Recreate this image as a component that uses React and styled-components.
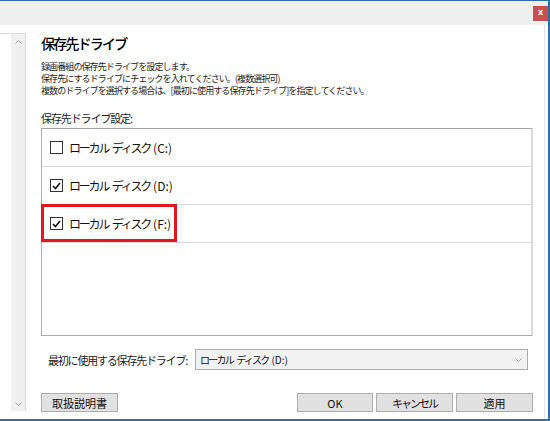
import React from "react";
import styled, { createGlobalStyle } from "styled-components";

const GlobalStyle = createGlobalStyle`
  html, body {
    margin: 0;
    padding: 0;
    background: #ffffff;
  }
  body {
    font-family: "Noto Sans CJK JP", "Noto Sans", sans-serif;
    color: #000;
  }
`;

const Window = styled.div`
  box-sizing: border-box;
  width: 550px;
  height: 421px;
  display: flex;
  flex-direction: column;
  background: #fff;
  border-top: 1px solid #2f6ea6;
  border-right: 2px solid #2f6ea6;
  border-bottom: 2px solid #2f6ea6;
`;

const TitleBar = styled.div`
  height: 24px;
  flex: none;
  background: #f0f0f0;
  display: flex;
  justify-content: flex-end;
  align-items: flex-start;
  padding-top: 5px;
  box-sizing: border-box;
`;

const CloseButton = styled.div`
  width: 15px;
  height: 15px;
  background: #c75050;
  color: #fff;
  font-family: "DejaVu Sans", sans-serif;
  font-size: 8px;
  font-weight: bold;
  line-height: 14px;
  text-align: center;
`;

const Body = styled.div`
  flex: 1;
  display: flex;
  margin-right: 3px;
  border-right: 1px solid #e3e3e3;
  min-height: 0;
`;

const Sidebar = styled.div`
  width: 26px;
  flex: none;
  box-sizing: border-box;
  margin: 8px 0;
  border-top: 1px solid #dcdcdc;
  border-right: 1px solid #dcdcdc;
  display: flex;
  justify-content: flex-end;
`;

const ScrollTrack = styled.div`
  width: 14px;
  background: #f0f0f0;
  display: flex;
  flex-direction: column;
  justify-content: space-between;
  align-items: center;
  padding: 6px 0 5px;
  box-sizing: border-box;
`;

const Main = styled.div`
  flex: 1;
  display: flex;
  flex-direction: column;
  padding: 9px 11px 0 15px;
  min-width: 0;
`;

const Title = styled.div`
  font-size: 14px;
  line-height: 18px;
  letter-spacing: -1.8px;
  font-weight: 500;
`;

const Desc = styled.div`
  margin-top: 9px;
  font-size: 9px;
  line-height: 12px;
  letter-spacing: -0.9px;
  color: #222;
`;

const Label = styled.div`
  margin-top: 14px;
  font-size: 11px;
  line-height: 14px;
  letter-spacing: -1.1px;
  color: #222;
`;

const DriveList = styled.div`
  margin-top: 3px;
  height: 208px;
  box-sizing: border-box;
  border: 1px solid #adadad;
  border-top-color: #a4a3b4;
  border-right: 2px solid #dadada;
  background: #fff;
`;

const Row = styled.div`
  position: relative;
  height: 38px;
  box-sizing: border-box;
  border-bottom: 1px solid #dadada;
  display: flex;
  align-items: center;
  padding-left: 8px;
`;

const Highlight = styled.div`
  position: absolute;
  left: -1px;
  top: -1px;
  width: 136px;
  height: 38px;
  box-sizing: border-box;
  border: 3px solid #e3151e;
  pointer-events: none;
`;

const Box = styled.div`
  width: 13px;
  height: 13px;
  box-sizing: border-box;
  border: 1px solid #333;
  background: #fff;
  display: flex;
  align-items: center;
  justify-content: center;
  flex: none;
`;

const RowText = styled.span`
  margin-left: 6px;
  font-size: 12px;
  color: #111;
  white-space: nowrap;
`;

const Kana = styled.span`
  letter-spacing: ${(p) => p.$ls}px;
  word-spacing: ${(p) => p.$ws}px;
`;

const Latin = styled.span`
  letter-spacing: 0;
  margin-left: ${(p) => p.$gap}px;
`;

const FirstDriveRow = styled.div`
  margin-top: 13px;
  display: flex;
  align-items: center;
  padding-left: 7px;
`;

const FirstLabel = styled.span`
  font-size: 11px;
  letter-spacing: -1.2px;
  color: #222;
  white-space: nowrap;
`;

const Combo = styled.div`
  flex: 1;
  margin: 0 5px 0 8px;
  height: 21px;
  box-sizing: border-box;
  border: 1px solid #acacac;
  background: #f2f2f2;
  display: flex;
  align-items: center;
  justify-content: space-between;
  padding: 0 5px 0 4px;
  font-size: 10px;
  color: #111;
  white-space: nowrap;
`;

const ButtonRow = styled.div`
  margin-top: 23px;
  display: flex;
  justify-content: space-between;
`;

const ButtonGroup = styled.div`
  display: flex;
  gap: 3px;
`;

const Button = styled.div`
  width: ${(p) => p.$w || 77}px;
  height: 19px;
  box-sizing: border-box;
  border: 1px solid #adadad;
  background: #e1e1e1;
  display: flex;
  align-items: center;
  justify-content: center;
  font-size: 11px;
  letter-spacing: ${(p) => p.$ls || 0}px;
  color: #111;
`;

function Chevron({ up }) {
  return (
    <svg width="7" height="4" viewBox="0 0 7 4">
      <path
        d={up ? "M0.5 3.5 L3.5 0.5 L6.5 3.5" : "M0.5 0.5 L3.5 3.5 L6.5 0.5"}
        fill="none"
        stroke="#a8a8a8"
        strokeWidth="1"
      />
    </svg>
  );
}

function CheckBox({ checked }) {
  return (
    <Box>
      {checked && (
        <svg width="9" height="8" viewBox="0 0 9 8">
          <path d="M1 4 L3.5 6.5 L8 1" fill="none" stroke="#111" strokeWidth="1.6" />
        </svg>
      )}
    </Box>
  );
}

// "ローカル ディスク" + "(X:)" ; kana squeezed, drive letter at normal spacing
function DriveName({ letter, ls, ws, gap }) {
  return (
    <>
      <Kana $ls={ls} $ws={ws}>
        ローカル ディスク
      </Kana>
      <Latin $gap={gap}>({letter}:)</Latin>
    </>
  );
}

const drives = [
  { letter: "C", checked: false },
  { letter: "D", checked: true },
  { letter: "F", checked: true, marked: true },
];

export default function App() {
  return (
    <>
      <GlobalStyle />
      <Window>
        <TitleBar>
          <CloseButton>x</CloseButton>
        </TitleBar>
        <Body>
          <Sidebar>
            <ScrollTrack>
              <Chevron up />
              <Chevron />
            </ScrollTrack>
          </Sidebar>
          <Main>
            <Title>保存先ドライブ</Title>
            <Desc>
              録画番組の保存先ドライブを設定します。
              <br />
              保存先にするドライブにチェックを入れてください。(複数選択可)
              <br />
              複数のドライブを選択する場合は、[最初に使用する保存先ドライブ]を指定してください。
            </Desc>
            <Label>保存先ドライブ設定:</Label>
            <DriveList>
              {drives.map((d) => (
                <Row key={d.letter}>
                  <CheckBox checked={d.checked} />
                  <RowText>
                    <DriveName letter={d.letter} ls={-2.2} ws={3} gap={3} />
                  </RowText>
                  {d.marked && <Highlight />}
                </Row>
              ))}
            </DriveList>
            <FirstDriveRow>
              <FirstLabel>最初に使用する保存先ドライブ:</FirstLabel>
              <Combo>
                <span>
                  <DriveName letter="D" ls={-1.8} ws={3} gap={3} />
                </span>
                <Chevron />
              </Combo>
            </FirstDriveRow>
            <ButtonRow>
              <Button>取扱説明書</Button>
              <ButtonGroup>
                <Button $w={76}>OK</Button>
                <Button $ls={-2}>キャンセル</Button>
                <Button>適用</Button>
              </ButtonGroup>
            </ButtonRow>
          </Main>
        </Body>
      </Window>
    </>
  );
}
